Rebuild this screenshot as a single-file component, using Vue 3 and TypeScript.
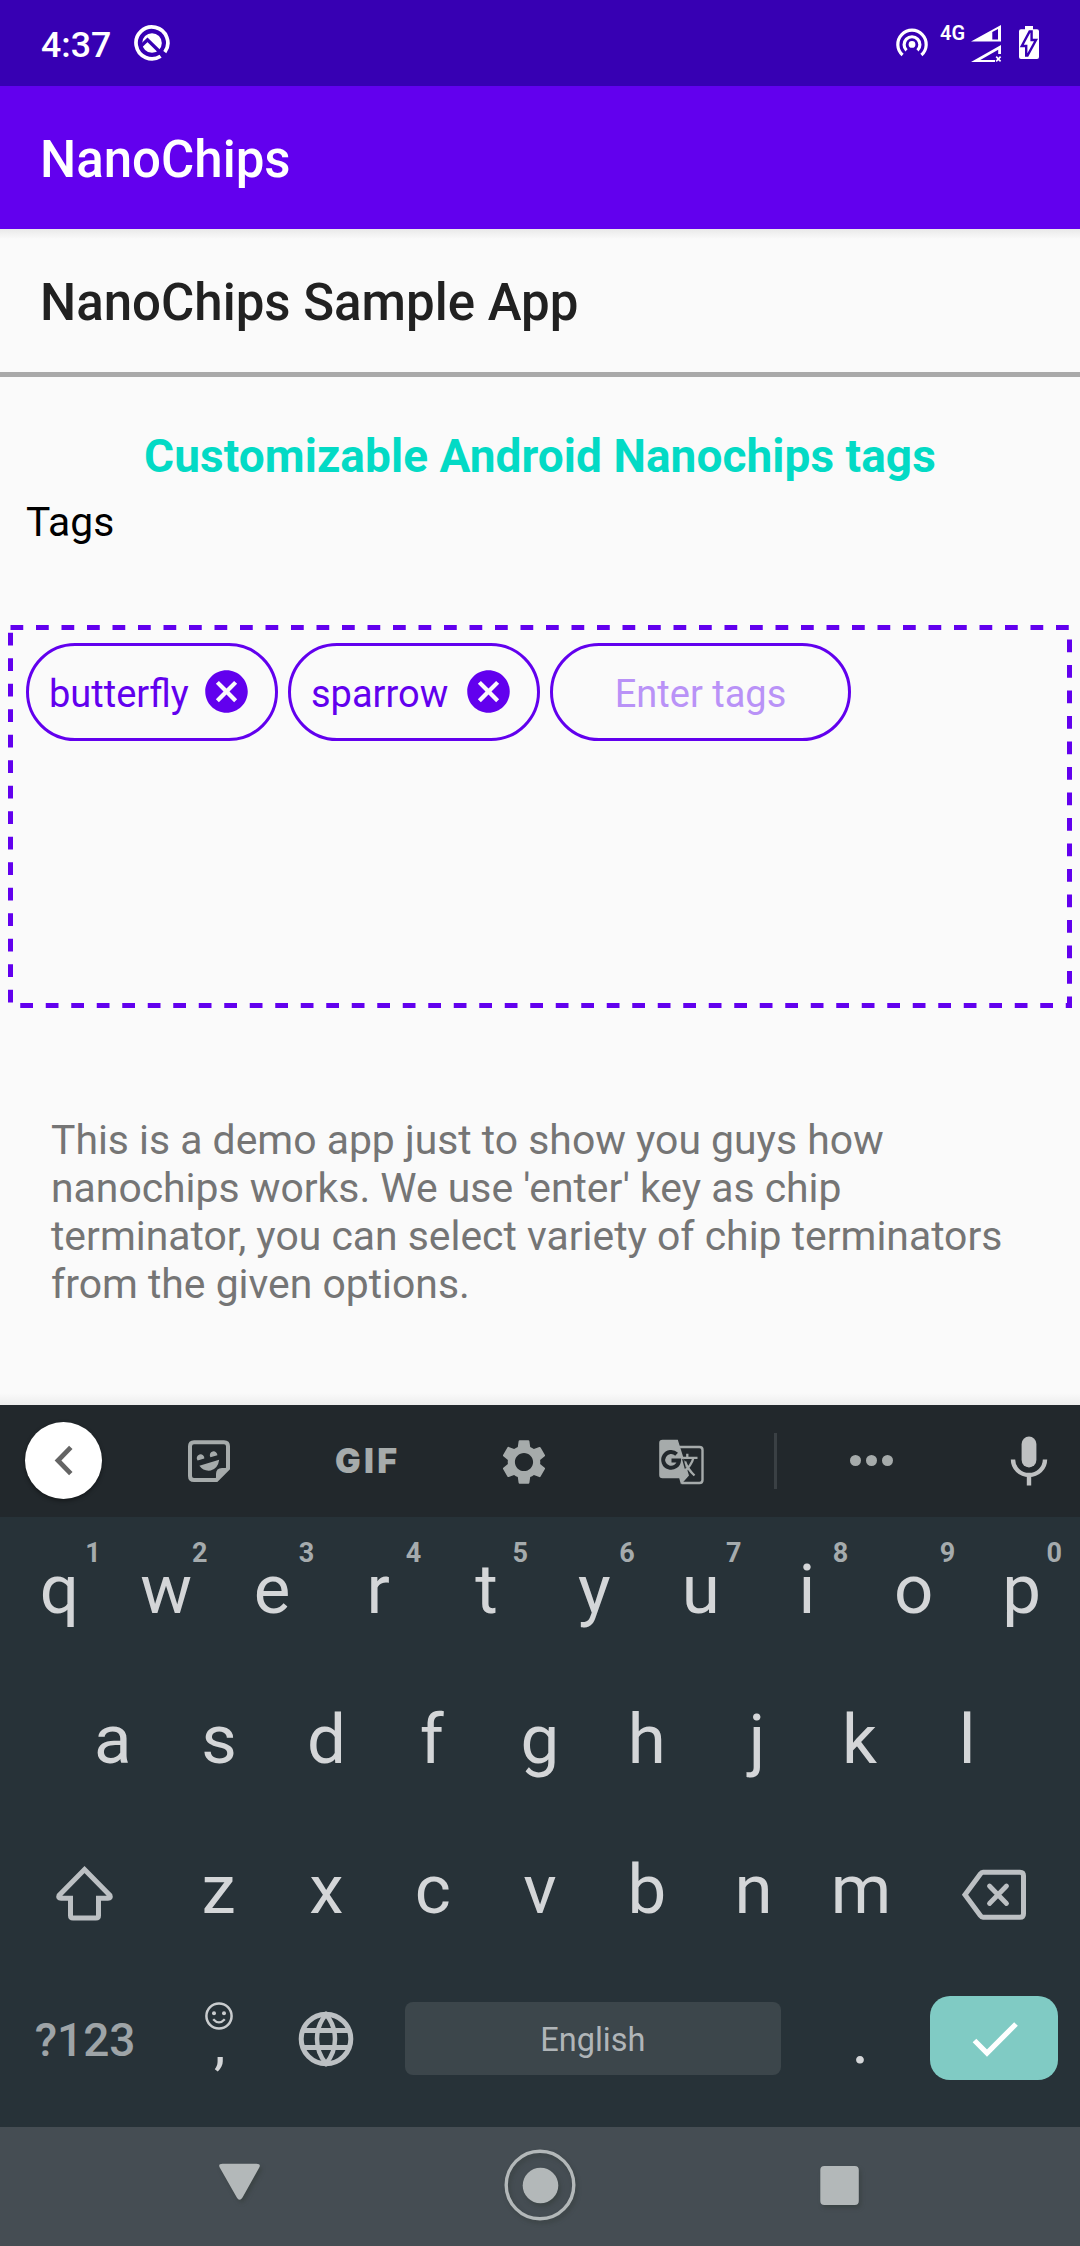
<script setup lang="ts">
interface Key {
  label: string
  hint?: string
}

const tags: string[] = ['butterfly', 'sparrow']

const description: string[] = [
  'This is a demo app just to show you guys how',
  "nanochips works. We use 'enter' key as chip",
  'terminator, you can select variety of chip terminators',
  'from the given options.',
]

const indents: Record<string, number> = { r: -3, f: -3, j: 7, e: -2, p: 2, y: 2, u: 1, z: -2, k: -2, m: 1, c: -1, s: -1 }
const indentOf = (label: string): string => `${indents[label] ?? 0}px`

const topRow: Key[] = 'qwertyuiop'.split('').map((label, i) => ({ label, hint: String((i + 1) % 10) }))
const homeRow: Key[] = 'asdfghjkl'.split('').map((label) => ({ label }))
const bottomRow: Key[] = 'zxcvbnm'.split('').map((label) => ({ label }))
</script>

<template>
  <div class="screen">
    <header class="status">
      <span class="time">4:37</span>
      <svg class="s-q" width="36" height="36" viewBox="0 0 36 36">
        <path d="M26.6 31.2A15.9 15.9 0 1 1 30.8 27.2" fill="none" stroke="#fff" stroke-width="3.7" />
        <circle cx="18" cy="18" r="9.8" fill="#fff" />
        <path d="M6.5 21.5L13.5 14.8L29.5 30.5" fill="none" stroke="#3700b3" stroke-width="3.4" />
      </svg>
      <div class="status-right">
        <svg class="s-hot" width="34" height="30" viewBox="0 0 34 30">
          <g fill="none" stroke="#fff" stroke-width="3.2">
            <path d="M7.6 27A14.2 14.2 0 1 1 26.4 27" />
            <path d="M11.5 22.3A7.9 7.9 0 1 1 22.5 22.3" />
          </g>
          <circle cx="17" cy="16.4" r="3.4" fill="#fff" />
        </svg>
        <span class="net">4G</span>
        <svg class="s-sig" width="32" height="40" viewBox="0 0 32 40">
          <path d="M1 17.5L31 1V17.5Z" fill="#fff" />
          <path d="M22.3 8V15.5H28V5Z" fill="#3700b3" />
          <path d="M1 38L31 21V30H28.2V25.8L10.3 36H25V38Z" fill="#fff" />
          <path d="M26.2 32.6L30.6 37.4M30.6 32.6L26.2 37.4" stroke="#fff" stroke-width="1.6" />
        </svg>
        <svg class="s-bat" width="20" height="33" viewBox="0 0 20 33">
          <path d="M6 0H14V3.2H18Q20 3.2 20 5.2V31Q20 33 18 33H2Q0 33 0 31V5.2Q0 3.2 2 3.2H6Z" fill="#fff" />
          <path d="M12.6 5.5V14H17L8.5 29.5H7.2V20H2.8L10.6 5.5Z" fill="#fff" stroke="#3700b3" stroke-width="2.4" />
        </svg>
      </div>
    </header>

    <div class="appbar">NanoChips</div>

    <main class="content">
      <h1 class="heading">NanoChips Sample App</h1>
      <h2 class="subtitle">Customizable Android Nanochips tags</h2>
      <div class="label">Tags</div>

      <section class="tagbox">
        <svg class="dashes" width="1080" height="383" viewBox="0 0 1080 383">
          <rect x="10.5" y="2.5" width="1059" height="378" fill="none" stroke="#6200ee" stroke-width="5" stroke-dasharray="12.75" />
        </svg>
        <div v-for="tag in tags" :key="tag" class="chip">
          <span class="chip-text">{{ tag }}</span>
          <svg class="chip-x" width="51" height="51" viewBox="0 0 24 24" fill="#6200ee">
            <path d="M12 2C6.47 2 2 6.47 2 12s4.47 10 10 10 10-4.47 10-10S17.53 2 12 2zm5 13.59L15.59 17 12 13.41 8.41 17 7 15.59 10.59 12 7 8.41 8.41 7 12 10.59 15.59 7 17 8.41 13.41 12 17 15.59z" />
          </svg>
        </div>
        <div class="chip entry">Enter tags</div>
      </section>

      <p class="description">
        <span v-for="line in description" :key="line">{{ line }}</span>
      </p>
    </main>

    <section class="keyboard">
      <div class="toolbar">
        <div class="cell">
          <div class="back">
            <svg width="77" height="77" viewBox="0 0 77 77">
              <path d="M45.8 25.4L33 38.5L45.8 51.6" fill="none" stroke="#646464" stroke-width="4.8" />
            </svg>
          </div>
        </div>
        <div class="cell">
          <svg width="44" height="44" viewBox="0 0 44 44">
            <path d="M7 3.2H37Q41 3.2 41 7.2V29.5L29.5 41H7Q3 41 3 37V7.2Q3 3.2 7 3.2Z" fill="none" stroke="#a6abab" stroke-width="4" />
            <path d="M42.5 29L29 42.8V35Q29 29 35 29Z" fill="#a6abab" />
            <path d="M10.6 21.5A3.8 3.8 0 1 1 17.3 19.6ZM23.4 18.2A3.8 3.8 0 1 1 30.4 16.3ZM12.4 26.8L32.2 20.8Q31 29.6 23.7 31.5Q16.5 32.5 12.4 26.8Z" fill="#a6abab" />
          </svg>
        </div>
        <div class="cell">
          <svg width="62" height="44" viewBox="0 0 62 44">
            <text x="0" y="34.3" class="gif" textLength="62" lengthAdjust="spacing">GIF</text>
          </svg>
        </div>
        <div class="cell">
          <svg class="gear" width="52" height="52" viewBox="0 0 24 24" fill="#a6abab">
            <path d="M19.43 12.98c.04-.32.07-.64.07-.98s-.03-.66-.07-.98l2.11-1.65c.19-.15.24-.42.12-.64l-2-3.46c-.12-.22-.39-.3-.61-.22l-2.49 1c-.52-.4-1.08-.73-1.69-.98l-.38-2.65C14.46 2.18 14.25 2 14 2h-4c-.25 0-.46.18-.49.42l-.38 2.65c-.61.25-1.17.59-1.69.98l-2.49-1c-.23-.09-.49 0-.61.22l-2 3.46c-.13.22-.07.49.12.64l2.11 1.65c-.04.32-.07.65-.07.98s.03.66.07.98l-2.11 1.65c-.19.15-.24.42-.12.64l2 3.46c.12.22.39.3.61.22l2.49-1c.52.4 1.08.73 1.69.98l.38 2.65c.03.24.24.42.49.42h4c.25 0 .46-.18.49-.42l.38-2.65c.61-.25 1.17-.59 1.69-.98l2.49 1c.23.09.49 0 .61-.22l2-3.46c.12-.22.07-.49-.12-.64l-2.11-1.65zM12 16.2c-2.32 0-4.2-1.88-4.2-4.2s1.88-4.2 4.2-4.2 4.2 1.88 4.2 4.2-1.88 4.2-4.2 4.2z" />
          </svg>
        </div>
        <div class="cell">
          <svg class="translate" width="45" height="46" viewBox="0 0 45 46">
            <path d="M20 8H40.5Q43.5 8 43.5 11V41Q43.5 44 40.5 44H23" fill="none" stroke="#a6abab" stroke-width="2.4" />
            <path d="M3.5 .8H18.8L30 36.5L22 45.5L20.2 39.3H3.5Q.2 39.3 .2 36V4Q.2 .8 3.5 .8Z" fill="#a6abab" />
            <path d="M17.6 15.2A7.9 7.9 0 1 0 20 21.5H12.5" fill="none" stroke="#22282c" stroke-width="4" />
            <path d="M22.5 18.8H38.5M28.3 14.8V18.8M34.5 18.8Q32.5 26.5 24.5 33.5M26 22.5Q29 30.5 35.5 36.5" fill="none" stroke="#a6abab" stroke-width="2.3" />
            <path d="M23.8 20L26.4 29.5" stroke="#22282c" stroke-width="1.4" />
          </svg>
        </div>
        <div class="cell"><i class="rule"></i></div>
        <div class="cell dots"><i></i><i></i><i></i></div>
        <div class="cell mic">
          <svg width="38" height="52" viewBox="0 0 38 52">
            <rect x="11.6" y="1.5" width="14.8" height="31" rx="7.4" fill="#bfc1c2" />
            <path d="M3 24.5A16 15.5 0 0 0 35 24.5M19 40V50.5" fill="none" stroke="#bfc1c2" stroke-width="4.4" />
          </svg>
        </div>
      </div>

      <div class="row">
        <div v-for="k in topRow" :key="k.label" class="key" :style="{ textIndent: indentOf(k.label) }">{{ k.label }}<span class="hint">{{ k.hint }}</span></div>
      </div>
      <div class="row">
        <div v-for="k in homeRow" :key="k.label" class="key" :style="{ textIndent: indentOf(k.label) }">{{ k.label }}</div>
      </div>
      <div class="row">
        <div class="key wide shift">
          <svg width="60" height="58" viewBox="0 0 60 58">
            <path d="M30.5 5.5L56 31.5Q57.2 34.2 54 34.2H44.5V51.5Q44.5 54 42 54H19Q16.5 54 16.5 51.5V34.2H7Q3.8 34.2 5 31.5Z" fill="none" stroke="#bcc0c3" stroke-width="5" />
          </svg>
        </div>
        <div v-for="k in bottomRow" :key="k.label" class="key" :style="{ textIndent: indentOf(k.label) }">{{ k.label }}</div>
        <div class="key wide backspace">
          <svg width="66" height="54" viewBox="0 0 66 54">
            <path d="M22 4.3H59Q62.5 4.3 62.5 7.8V45.7Q62.5 49.2 59 49.2H22Q20.5 49.2 19.5 47.7L4 26.8L19.5 5.8Q20.5 4.3 22 4.3Z" fill="none" stroke="#bcc0c3" stroke-width="5" />
            <path d="M28.5 18L45.5 35.5M45.5 18L28.5 35.5" stroke="#bcc0c3" stroke-width="4.8" stroke-linecap="round" />
          </svg>
        </div>
      </div>
      <div class="row">
        <div class="key wide symbols">?123</div>
        <div class="key comma">
          ,
          <svg class="smile" width="30" height="30" viewBox="0 0 30 30">
            <circle cx="15" cy="15" r="12.6" fill="none" stroke="#c9ccce" stroke-width="2.5" />
            <circle cx="10" cy="12.2" r="2" fill="#c9ccce" />
            <circle cx="20" cy="12.2" r="2" fill="#c9ccce" />
            <path d="M9.2 18.2Q15 24.5 20.8 18.2" fill="none" stroke="#c9ccce" stroke-width="2.3" />
          </svg>
        </div>
        <div class="key globe">
          <svg width="58" height="58" viewBox="0 0 58 58" fill="none" stroke="#bcc0c3" stroke-width="5">
            <circle cx="29" cy="29" r="24.8" />
            <path d="M5 20.5H53M5 37.5H53" />
            <path d="M29 4.5Q20 15 20 29T29 53.5Q38 43 38 29T29 4.5Z" stroke-width="4.5" />
          </svg>
        </div>
        <div class="space"><span>English</span></div>
        <div class="key">.</div>
        <div class="wide">
          <div class="enter">
            <svg width="128" height="84" viewBox="0 0 128 84">
              <path d="M44.5 44.5L57 57L86 28" fill="none" stroke="#fff" stroke-width="5.2" />
            </svg>
          </div>
        </div>
      </div>
    </section>

    <nav class="nav">
      <svg width="1080" height="119" viewBox="0 0 1080 119">
        <g class="shadowed" fill="#b3b8b9">
          <path d="M222.5 36.8H256.5Q261.5 36.8 259 41L242.5 70.5Q239.5 75 236.8 70.5L220 41Q217.5 36.8 222.5 36.8Z" />
          <circle cx="540" cy="58" r="33.8" fill="none" stroke="#b3b8b9" stroke-width="3.4" />
          <circle cx="540.5" cy="58.5" r="17.8" />
          <rect x="820.3" y="39" width="38.5" height="39" rx="4" />
        </g>
      </svg>
    </nav>
  </div>
</template>

<style>
body {
  margin: 0;
}
</style>

<style scoped>
.screen {
  width: 1080px;
  height: 2246px;
  display: flex;
  flex-direction: column;
  overflow: hidden;
  background: #fafafa;
  font-family: Roboto, "Liberation Sans", sans-serif;
}
svg {
  display: block;
  flex: none;
}
.status {
  height: 86px;
  flex: none;
  display: flex;
  background: #3700b3;
  color: #fff;
  padding: 0 41px;
}
.time {
  font-size: 35.7px;
  font-weight: 500;
  line-height: 90px;
  width: 70px;
}
.s-q {
  margin: 25px 0 0 23px;
}
.status-right {
  margin-left: auto;
  display: flex;
}
.s-hot {
  margin: 28px 11px 0 0;
}
.net {
  width: 30px;
  font-size: 20px;
  font-weight: 600;
  line-height: 67px;
}
.s-sig {
  margin: 24px 17px 0 0;
}
.s-bat {
  margin-top: 26px;
}
.appbar {
  height: 143px;
  flex: none;
  background: #6200ee;
  color: #fff;
  font-size: 51px;
  font-weight: 500;
  line-height: 147px;
  padding-left: 40px;
}
.content {
  height: 1176px;
  flex: none;
  display: flex;
  flex-direction: column;
  background: linear-gradient(#e9e9e9, #fafafa 10px, #fafafa 1164px, #ededed);
}
.heading {
  margin: 0;
  height: 143px;
  padding-left: 40px;
  border-bottom: 5px solid #a9a9a9;
  color: #212121;
  font-size: 51px;
  font-weight: 500;
  line-height: 147px;
}
.subtitle {
  margin: 52px 0 0;
  text-align: center;
  color: #03dac5;
  font-size: 46px;
  font-weight: 700;
  letter-spacing: 0.05px;
  line-height: 54px;
}
.label {
  margin: 15px 0 0 26px;
  color: #000;
  font-size: 40.8px;
  line-height: 48px;
}
.tagbox {
  position: relative;
  box-sizing: border-box;
  height: 383px;
  margin-top: 79px;
  padding: 18px 26px;
  display: flex;
  align-items: flex-start;
  gap: 10px;
}
.dashes {
  position: absolute;
  left: 0;
  top: 0;
}
.chip {
  box-sizing: border-box;
  width: 252px;
  height: 98px;
  border: 3px solid #6200ee;
  border-radius: 49px;
  display: flex;
  justify-content: space-between;
  padding: 0 23px 0 20px;
  color: #6200ee;
  font-size: 38px;
  line-height: 97px;
}
.chip-x {
  margin-top: 20px;
}
.entry {
  width: 301px;
  padding: 0;
  justify-content: center;
  color: #b992f7;
}
.description {
  margin: 108px 0 0 51px;
  display: flex;
  flex-direction: column;
  color: #757575;
  font-size: 40.88px;
  line-height: 48px;
  white-space: nowrap;
}
.keyboard {
  height: 722px;
  flex: none;
  background: #273238;
}
.toolbar {
  height: 112px;
  display: grid;
  grid-template-columns: 127px 164px 149px 168px 148px 39px 152px 133px;
  background: #22282c;
}
.cell {
  display: flex;
  align-items: center;
  justify-content: center;
  padding-bottom: 1px;
}
.back {
  width: 77px;
  height: 77px;
  border-radius: 50%;
  background: #fff;
  box-shadow: 0 2px 4px rgba(0, 0, 0, 0.4);
}
.gif {
  font-family: Inter, Roboto, sans-serif;
  font-size: 34px;
  font-weight: 900;
  fill: #a6abab;
}
.gear {
  margin-top: 3px;
}
.translate {
  margin-top: 3px;
  margin-right: 1px;
}
.rule {
  width: 3px;
  height: 56px;
  background: #3a4044;
}
.dots {
  gap: 5px;
}
.dots i {
  width: 11px;
  height: 11px;
  border-radius: 50%;
  background: #a6abab;
}
.mic {
  justify-content: flex-end;
  padding-right: 32px;
}
.row {
  height: 150px;
  display: flex;
  justify-content: center;
}
.key {
  position: relative;
  width: 106.8px;
  text-align: center;
  color: #d4d6d8;
  font-size: 69px;
  line-height: 146px;
}
.hint {
  position: absolute;
  left: 54px;
  top: 0;
  width: 66px;
  text-indent: 0;
  font-size: 27px;
  font-weight: 700;
  line-height: 73px;
  color: #a5abad;
}
.wide {
  width: 160.2px;
  display: flex;
  justify-content: center;
}
.shift svg {
  margin: 47px 4px 0 0;
}
.backspace svg {
  margin-top: 51px;
}
.key.symbols {
  box-sizing: border-box;
  padding-right: 2px;
  color: #9ea4a7;
  font-size: 46px;
  font-weight: 500;
  line-height: 147px;
}
.key.comma {
  font-size: 58px;
  line-height: 153px;
}
.smile {
  position: absolute;
  left: 38px;
  top: 34px;
}
.globe svg {
  margin: 43px 0 0 24px;
}
.space {
  box-sizing: border-box;
  width: 427.2px;
  padding: 35px 26.2px 0 25px;
}
.space span {
  display: block;
  height: 73px;
  border-radius: 8px;
  background: #3c464b;
  color: #b0b5b8;
  font-size: 32.5px;
  line-height: 76px;
  text-align: center;
}
.enter {
  width: 128px;
  height: 84px;
  margin-top: 29px;
  border-radius: 20px;
  background: #80cbc4;
}
.nav {
  height: 119px;
  flex: none;
  background: #454d53;
}
.shadowed {
  filter: drop-shadow(2px 3px 2px rgba(40, 50, 40, 0.35));
}
</style>
